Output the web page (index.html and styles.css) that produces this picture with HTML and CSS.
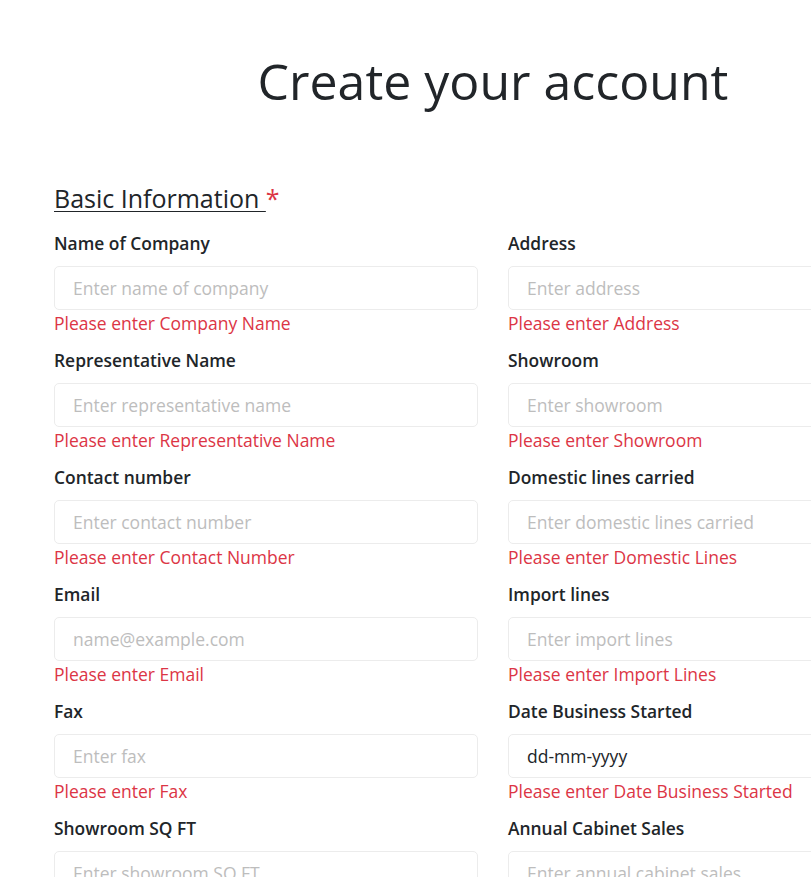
FILE: index.html
```html
<!DOCTYPE html>
<html lang="en">
<head>
<meta charset="utf-8">
<title>Create your account</title>
<link rel="stylesheet" href="styles.css">
</head>
<body>
<div class="page">
  <h1 class="title">Create your account</h1>
  <h2 class="section"><span class="section-text">Basic Information </span><span class="req">*</span></h2>
  <form class="grid">
    <div class="field">
      <label class="label">Name of Company</label>
      <input class="input" type="text" placeholder="Enter name of company">
      <div class="error">Please enter Company Name</div>
    </div>
    <div class="field">
      <label class="label">Address</label>
      <input class="input" type="text" placeholder="Enter address">
      <div class="error">Please enter Address</div>
    </div>
    <div class="field">
      <label class="label">Representative Name</label>
      <input class="input" type="text" placeholder="Enter representative name">
      <div class="error">Please enter Representative Name</div>
    </div>
    <div class="field">
      <label class="label">Showroom</label>
      <input class="input" type="text" placeholder="Enter showroom">
      <div class="error">Please enter Showroom</div>
    </div>
    <div class="field">
      <label class="label">Contact number</label>
      <input class="input" type="text" placeholder="Enter contact number">
      <div class="error">Please enter Contact Number</div>
    </div>
    <div class="field">
      <label class="label">Domestic lines carried</label>
      <input class="input" type="text" placeholder="Enter domestic lines carried">
      <div class="error">Please enter Domestic Lines</div>
    </div>
    <div class="field">
      <label class="label">Email</label>
      <input class="input" type="text" placeholder="name@example.com">
      <div class="error">Please enter Email</div>
    </div>
    <div class="field">
      <label class="label">Import lines</label>
      <input class="input" type="text" placeholder="Enter import lines">
      <div class="error">Please enter Import Lines</div>
    </div>
    <div class="field">
      <label class="label">Fax</label>
      <input class="input" type="text" placeholder="Enter fax">
      <div class="error">Please enter Fax</div>
    </div>
    <div class="field">
      <label class="label">Date Business Started</label>
      <input class="input" type="text" value="dd-mm-yyyy">
      <div class="error">Please enter Date Business Started</div>
    </div>
    <div class="field">
      <label class="label">Showroom SQ FT</label>
      <input class="input" type="text" placeholder="Enter showroom SQ FT">
      <div class="error">Please enter Showroom SQ FT</div>
    </div>
    <div class="field">
      <label class="label">Annual Cabinet Sales</label>
      <input class="input" type="text" placeholder="Enter annual cabinet sales">
      <div class="error">Please enter Annual Cabinet Sales</div>
    </div>
  </form>
</div>
</body>
</html>
```
FILE: styles.css
```css
html, body {
  margin: 0;
  padding: 0;
  background: #fff;
  overflow: hidden;
}
body {
  font-family: "Open Sans", "Liberation Sans", sans-serif;
  color: #212529;
}
.page {
  width: 986px;
  box-sizing: border-box;
  padding: 48px 54px 40px;
}
.title {
  margin: 0;
  font-size: 50px;
  font-weight: 400;
  line-height: 67px;
  text-align: center;
}
.section {
  margin: 68px 0 0;
  font-size: 25px;
  font-weight: 400;
  line-height: 30px;
}
.section-text {
  text-decoration: underline;
  text-underline-offset: 3px;
  text-decoration-thickness: 1px;
}
.req {
  color: #dc3545;
}
.grid {
  display: grid;
  grid-template-columns: 424px 424px;
  column-gap: 30px;
  row-gap: 11px;
  margin-top: 17px;
}
.field {
  display: flex;
  flex-direction: column;
}
.label {
  font-size: 17.4px;
  font-weight: 600;
  line-height: 26px;
  margin-bottom: 10px;
}
.input {
  height: 44px;
  box-sizing: border-box;
  border: 1px solid #ececec;
  border-radius: 5px;
  padding: 0 18px;
  font-family: inherit;
  font-size: 17.5px;
  color: #212529;
  background: #fff;
  outline: none;
}
.input::placeholder {
  color: #bdbdbd;
}
.error {
  font-size: 17.5px;
  line-height: 26px;
  color: #dc3545;
}
```
